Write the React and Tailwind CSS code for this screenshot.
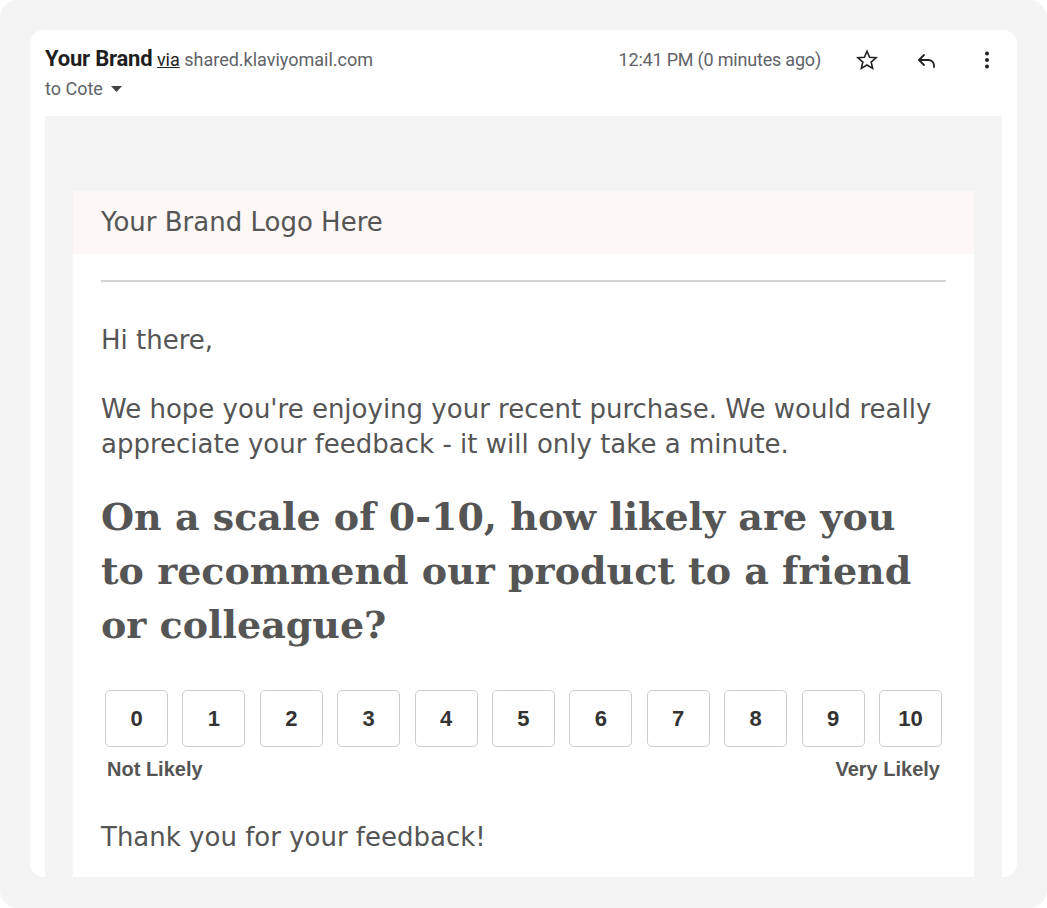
import React from "react";

const scores = [0, 1, 2, 3, 4, 5, 6, 7, 8, 9, 10];

const Star = () => (
  <svg width="24" height="24" viewBox="0 0 24 24" fill="none" stroke="#222" strokeWidth="1.6" strokeLinejoin="miter">
    <path d="M12 3.2l2.6 6 6.5.55-4.95 4.3 1.5 6.35L12 17.05 6.35 20.4l1.5-6.35L2.9 9.75l6.5-.55z" />
  </svg>
);

const Reply = () => (
  <svg width="24" height="24" viewBox="0 0 24 24" fill="none" stroke="#222" strokeWidth="1.8" strokeLinecap="round" strokeLinejoin="round">
    <path d="M9 7l-5 5 5 5" />
    <path d="M4.5 12h9a5.5 5.5 0 0 1 5.5 5.5v1.5" />
  </svg>
);

const More = () => (
  <svg width="24" height="24" viewBox="0 0 24 24" fill="#222">
    <circle cx="12" cy="5.5" r="2" />
    <circle cx="12" cy="12" r="2" />
    <circle cx="12" cy="18.5" r="2" />
  </svg>
);

export default function App() {
  return (
    <div className="w-[1047px] h-[908px] bg-white">
      <div className="w-full h-full bg-[#f4f4f4] rounded-[18px] pt-[30px] px-[30px] overflow-hidden">
        <div className="h-[847px] bg-white rounded-[14px] px-[15px] pt-[15px] font-['Roboto',sans-serif] flex flex-col">
          {/* header */}
          <div className="flex items-start justify-between">
            <div>
              <div className="text-[18px] leading-[28px] text-[#5f6368]">
                <span className="font-bold text-[22px] text-[#1f1f1f] tracking-[-0.2px]">Your Brand</span>{" "}
                <span className="underline text-[#222]">via</span> shared.klaviyomail.com
              </div>
              <div className="flex items-center gap-[8px] text-[18px] leading-[24px] text-[#5f6368] mt-[3px]">
                to Cote
                <svg width="11" height="6" viewBox="0 0 11 6" fill="#444">
                  <path d="M0 0h11L5.5 6z" />
                </svg>
              </div>
            </div>
            <div className="flex items-center mt-[1px]">
              <span className="text-[18px] leading-[28px] text-[#5f6368] mr-[34px] tracking-[-0.2px]">12:41 PM (0 minutes ago)</span>
              <div className="w-[24px] flex justify-center"><Star /></div>
              <div className="w-[24px] flex justify-center ml-[36px]"><Reply /></div>
              <div className="w-[24px] flex justify-center ml-[36px] mr-[3px]"><More /></div>
            </div>
          </div>

          {/* email body */}
          <div className="flex-1 bg-[#f4f4f4] mt-[15px] px-[28px] pt-[75px] overflow-hidden">
            <div className="bg-white h-full font-['DejaVu_Sans',sans-serif] text-[#555]">
              <div className="bg-[#fdf7f6] h-[63px] px-[28px] flex items-center text-[26px]">
                Your Brand Logo Here
              </div>
              <div className="px-[28px]">
                <div className="h-[2px] bg-[#d4d4d4] mt-[26px]"></div>
                <p className="mt-[41px] text-[26px] leading-[35px]">Hi there,</p>
                <p className="mt-[34px] text-[26px] leading-[35px]">
                  We hope you're enjoying your recent purchase. We would really appreciate your feedback - it will only take a minute.
                </p>
                <h1 className="mt-[28px] font-['DejaVu_Serif',serif] font-bold text-[38px] leading-[54px] text-[#555]">
                  On a scale of 0-10, how likely are you to recommend our product to a friend or colleague?
                </h1>
                <div className="mt-[38px] flex justify-between px-[4px]">
                  {scores.map((n) => (
                    <div
                      key={n}
                      className="w-[63px] h-[57px] border border-[#cfcccc] rounded-[5px] flex items-center justify-center font-['Liberation_Sans',sans-serif] font-bold text-[22px] text-[#333]"
                    >
                      {n}
                    </div>
                  ))}
                </div>
                <div className="flex justify-between px-[6px] mt-[8px] font-['Liberation_Sans',sans-serif] font-bold text-[20px] leading-[28px] text-[#555]">
                  <span>Not Likely</span>
                  <span>Very Likely</span>
                </div>
                <p className="mt-[37px] text-[26px] leading-[35px]">Thank you for your feedback!</p>
              </div>
            </div>
          </div>
        </div>
      </div>
    </div>
  );
}
